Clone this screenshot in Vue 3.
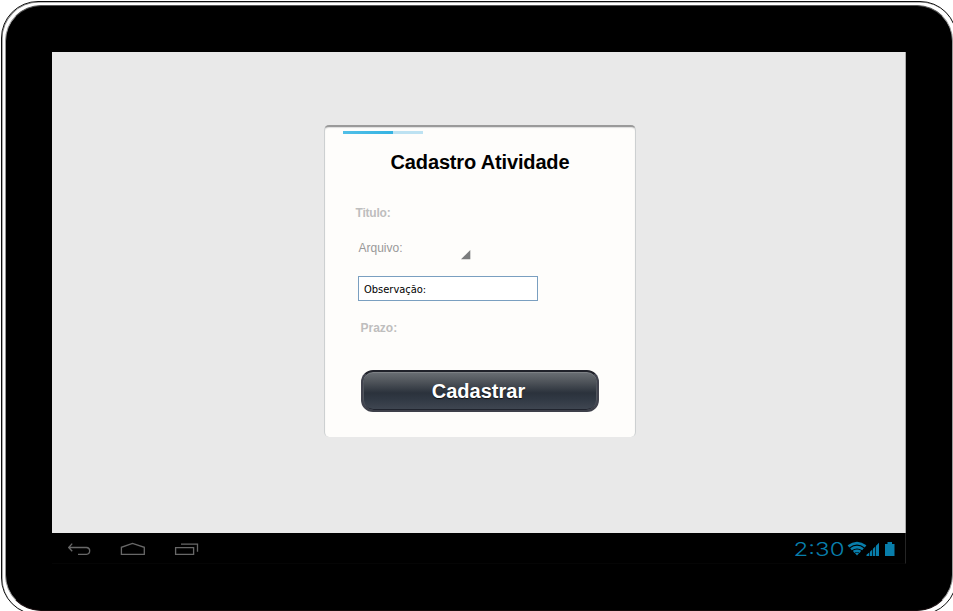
<script setup>
import { ref } from 'vue'

const title = ref('Titulo:')
const file = ref('Arquivo:')
const notes = ref('Observação:')
const deadline = ref('Prazo:')
</script>

<template>
  <div class="stage">
    <div class="rim">
      <div class="tablet">
        <main class="screen">
          <section class="card">
            <div class="tabs"><span class="tab-active"></span></div>
            <h1>Cadastro Atividade</h1>
            <div class="field title-field">{{ title }}</div>
            <div class="field file-field">
              <span>{{ file }}</span>
              <svg class="spinner" width="10" height="10" viewBox="0 0 10 10"><path d="M9.3 0V9.3H0Z" fill="#7b7c7d" /></svg>
            </div>
            <div class="notes">{{ notes }}</div>
            <div class="field deadline-field">{{ deadline }}</div>
            <button class="submit" type="button"><span>Cadastrar</span></button>
          </section>
        </main>
        <footer class="navbar">
          <svg class="keys" width="132" height="16" viewBox="0 0 132 16" fill="none" stroke="#686868" stroke-width="1.3">
            <path d="M0.7 5.5H18.5Q21.7 5.8 21.7 8.7Q21.7 12 18.5 12.3H10M4.2 1.6L0.7 5.5L4.2 9.3" />
            <path d="M53.4 12.4V5.3L64.5 1.5L76.3 5.3V12.4Z" />
            <path d="M107.6 5.6H125.6V12.4H107.6ZM113 2.2H129.5V9.8" />
          </svg>
          <svg class="status" width="104" height="26" viewBox="0 0 104 26" fill="#087eab">
            <text class="clock" x="2.5" y="20" textLength="51" lengthAdjust="spacingAndGlyphs">2:30</text>
            <g fill="none" stroke="#087eab" stroke-width="2.6">
              <path d="M57.4 10.4Q66 3.8 74.6 10.4" />
              <path d="M60 13.2Q66 8.9 72 13.2" />
              <path d="M62.6 15.8Q66 13.6 69.4 15.8" />
            </g>
            <path d="M64 17.2Q66 16 68 17.2L66 19.5Z" />
            <path d="M75.5 20V18.7L78.3 16.4V20ZM79 20V15.7L81.3 13.4V20ZM82 20V12.7L84.3 10.4V20ZM85 20V9.7L88 6.7V20Z" />
            <path d="M94 8H96.5V6H101V8H103.5V20H94Z" />
          </svg>
        </footer>
      </div>
    </div>
  </div>
</template>

<style>
body {
  background: #fff;
  overflow: hidden;
}
</style>

<style scoped>
.stage {
  width: 953px;
  height: 611px;
  overflow: hidden;
}

.rim {
  box-sizing: border-box;
  width: 956px;
  height: 614px;
  margin: 1px 0 0 1px;
  padding: 3px 2px 2px 3px;
  border: 1px solid #111;
  border-radius: 37px;
  box-shadow: inset 0.6px 0.6px 0 #777;
}

.tablet {
  box-sizing: border-box;
  width: 948px;
  height: 606px;
  padding: 46px;
  border: 1px solid #999;
  border-top-color: #555;
  border-bottom-color: #160b0d;
  border-radius: 36px;
  background: #000;
}

.screen {
  box-sizing: border-box;
  display: flex;
  justify-content: center;
  align-items: flex-start;
  height: 481px;
  padding-top: 73px;
  padding-left: 2px;
  border-right: 1px solid #aaa;
  background: #e9e9e9;
}

.card {
  box-sizing: border-box;
  width: 312px;
  height: 312px;
  border: 1px solid #cdd0d1;
  border-top: 2px solid #9a9a9a;
  border-bottom: 0;
  border-radius: 5px;
  background: #fefdfb;
  box-shadow: inset 0 1px 1px #ddd;
  font-family: 'Liberation Sans', sans-serif;
}

.tabs {
  width: 80px;
  height: 3px;
  margin: 4px 0 0 18px;
  background: #bde2f2;
}

.tab-active {
  display: block;
  width: 50px;
  height: 3px;
  background: linear-gradient(90deg, #51bfe7, #35b3e2);
}

h1 {
  margin: 16px 0 0;
  padding-left: 1px;
  font-size: 20px;
  line-height: 24px;
  font-weight: 700;
  letter-spacing: -0.15px;
  text-align: center;
  color: #000;
}

.field {
  font-size: 12px;
  line-height: 16px;
  font-weight: 700;
  color: #bebebe;
}

.title-field {
  margin: 31px 0 0 31px;
  letter-spacing: -0.2px;
}

.file-field {
  display: flex;
  align-items: flex-start;
  justify-content: space-between;
  width: 112.5px;
  margin: 19px 0 0 34px;
  font-weight: 400;
  color: #999;
}

.spinner {
  margin-top: 10px;
}

.notes {
  box-sizing: border-box;
  width: 180px;
  height: 25px;
  margin: 16px 0 0 33px;
  padding: 1px 0 0 5.5px;
  border: 1px solid #7a9fc0;
  background: #fff;
  color: #000;
  font: 11px/23px 'DejaVu Sans Condensed', 'DejaVu Sans', sans-serif;
}

.deadline-field {
  margin: 19px 0 0 36px;
}

.submit {
  box-sizing: border-box;
  display: flex;
  justify-content: center;
  align-items: center;
  width: 238px;
  height: 42px;
  margin: 34px 0 0 36px;
  padding: 0 2px 1px 0;
  border: 2px solid #41434e;
  border-top-color: #20222a;
  border-bottom-color: #3e404a;
  border-radius: 12px;
  background: linear-gradient(#6b7075 0%, #50555b 25%, #2b323c 55%, #303843 70%, #404752 100%);
  box-shadow: inset 0 1px 0 #7d8185, inset 1px 0 0 #50555d, inset -1px 0 0 #50555d, inset 0 -1px 0 #20242e;
  color: #fff;
  font: 700 20px/24px 'Liberation Sans', sans-serif;
  text-shadow: 0 1px 1px #111;
}

.navbar {
  box-sizing: border-box;
  display: flex;
  justify-content: space-between;
  align-items: flex-start;
  height: 31px;
  padding: 3px 10px 0 16px;
  border-right: 1px solid #252525;
  border-bottom: 1px solid #050505;
}

.keys {
  margin-top: 6px;
}

.clock {
  font: 300 18.5px Inter, sans-serif;
}
</style>
